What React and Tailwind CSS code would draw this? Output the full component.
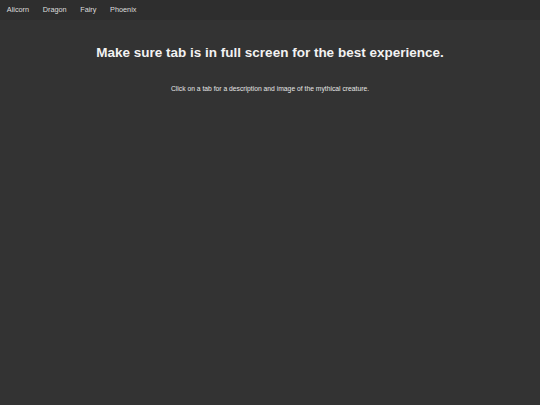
export default function App() {
  const tabs = ['Alicorn', 'Dragon', 'Fairy', 'Phoenix'];
  return (
    <div className="min-h-[405px] bg-[#333333] text-white" style={{ fontFamily: '"Liberation Sans", Arial, sans-serif' }}>
      <div className="flex h-[20px] bg-[#2e2e2e]">
        {tabs.map(t => (
          <button key={t} className="px-[6.8px] text-[7.3px] leading-[20px] text-[#dddddd]">
            {t}
          </button>
        ))}
      </div>
      <h1 className="mt-[23px] text-center text-[13.5px] font-bold leading-[20px] text-[#f2f2f2]">
        Make sure tab is in full screen for the best experience.
      </h1>
      <p className="mt-[21px] text-center text-[6.75px] leading-[10px] text-[#e6e6e6]">
        Click on a tab for a description and image of the mythical creature.
      </p>
    </div>
  );
}
